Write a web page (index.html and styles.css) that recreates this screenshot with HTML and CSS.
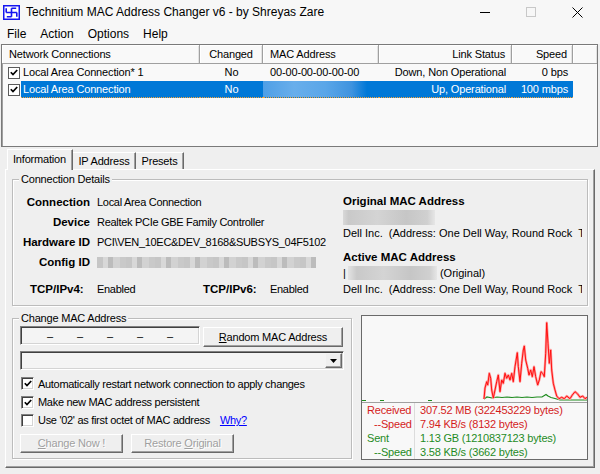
FILE: index.html
```html
<!DOCTYPE html>
<html lang="en">
<head>
<meta charset="utf-8">
<title>Technitium MAC Address Changer v6</title>
<link rel="stylesheet" href="styles.css">
</head>
<body>
<div class="titlebar">
  <svg class="appicon" width="17" height="15" viewBox="0 0 17 15">
    <rect x="0.75" y="0.75" width="15.5" height="13.5" fill="#fff" stroke="#1414f0" stroke-width="1.5"/>
    <path d="M8.5 3.2V11.8M3.2 7.5H13.8M8.5 3.2H13.2M8.5 11.8H3.8M3.2 7.5V3.2M13.8 7.5V11.8" stroke="#1414f0" stroke-width="1.6" fill="none"/>
  </svg>
  <span class="title">Technitium MAC Address Changer v6 - by Shreyas Zare</span>
  <div class="winctl">
    <span class="wbtn"><svg width="10" height="10" viewBox="0 0 10 10"><path d="M0 5.5H10" stroke="#000" stroke-width="1"/></svg></span>
    <span class="wbtn"><svg width="10" height="10" viewBox="0 0 10 10"><rect x="0.5" y="0.5" width="9" height="9" fill="none" stroke="#c8c8c8"/></svg></span>
    <span class="wbtn"><svg width="11" height="11" viewBox="0 0 11 11"><path d="M0.5 0.5L10.5 10.5M10.5 0.5L0.5 10.5" stroke="#000" stroke-width="1"/></svg></span>
  </div>
</div>
<div class="menubar"><span>File</span><span>Action</span><span>Options</span><span>Help</span></div>

<div class="listview">
  <div class="lv-head">
    <div class="c c1">Network Connections</div>
    <div class="c c2">Changed</div>
    <div class="c c3">MAC Address</div>
    <div class="c c4">Link Status</div>
    <div class="c c5">Speed</div>
    <div class="c c6"></div>
  </div>
  <div class="lv-row">
    <div class="c c1"><span class="lvchk"><svg width="8" height="7" viewBox="0 0 8 7"><path d="M0.8 3.2L3 5.6L7.2 1" stroke="#000" stroke-width="1.7" fill="none"/></svg></span><span class="name">Local Area Connection* 1</span></div>
    <div class="c c2">No</div>
    <div class="c c3">00-00-00-00-00-00</div>
    <div class="c c4">Down, Non Operational</div>
    <div class="c c5">0 bps</div>
  </div>
  <div class="lv-row sel">
    <div class="c c1"><span class="lvchk"><svg width="8" height="7" viewBox="0 0 8 7"><path d="M0.8 3.2L3 5.6L7.2 1" stroke="#000" stroke-width="1.7" fill="none"/></svg></span><span class="name">Local Area Connection</span></div>
    <div class="c c2">No</div>
    <div class="c c3"><span class="macblur"></span></div>
    <div class="c c4">Up, Operational</div>
    <div class="c c5">100 mbps</div>
  </div>
</div>

<div class="tabs">
  <div class="tabstrip">
    <span class="tab active">Information</span>
    <span class="tab t-ip">IP Address</span>
    <span class="tab t-pre">Presets</span>
  </div>
  <div class="panel">
    <div class="group details">
      <span class="legend">Connection Details</span>
      <div class="leftcol">
        <div class="kv"><span class="k">Connection</span><span class="v">Local Area Connection</span></div>
        <div class="kv"><span class="k">Device</span><span class="v">Realtek PCIe GBE Family Controller</span></div>
        <div class="kv"><span class="k">Hardware ID</span><span class="v">PCI\VEN_10EC&amp;DEV_8168&amp;SUBSYS_04F5102:</span></div>
        <div class="kv"><span class="k">Config ID</span><span class="v"><span class="blurbar"></span></span></div>
        <div class="tcp"><span class="tk1">TCP/IPv4:</span><span class="tv1">Enabled</span><span class="tk2">TCP/IPv6:</span><span>Enabled</span></div>
      </div>
      <div class="rightcol">
        <div class="rt">Original MAC Address</div>
        <div class="rl"><span class="macgray"></span></div>
        <div class="rl">Dell Inc.  (Address: One Dell Way, Round Rock  TX 78682 US)</div>
        <div class="rt gap">Active MAC Address</div>
        <div class="rl">|<span class="macgray short"></span> (Original)</div>
        <div class="rl">Dell Inc.  (Address: One Dell Way, Round Rock  TX 78682 US)</div>
      </div>
    </div>

    <div class="lower">
      <div class="group change">
        <span class="legend">Change MAC Address</span>
        <div class="row1">
          <div class="macin"><span>–</span><span>–</span><span>–</span><span>–</span><span>–</span></div>
          <div class="btn rnd"><u>R</u>andom MAC Address</div>
        </div>
        <div class="combo"><span class="arrow"><svg width="7" height="4" viewBox="0 0 7 4"><path d="M0 0H7L3.5 4Z" fill="#000"/></svg></span></div>
        <div class="opt o1"><span class="chk"><svg width="8" height="7" viewBox="0 0 8 7"><path d="M0.8 3.2L3 5.6L7.2 1" stroke="#000" stroke-width="1.7" fill="none"/></svg></span><span class="ot">Automatically restart network connection to apply changes</span></div>
        <div class="opt"><span class="chk"><svg width="8" height="7" viewBox="0 0 8 7"><path d="M0.8 3.2L3 5.6L7.2 1" stroke="#000" stroke-width="1.7" fill="none"/></svg></span><span class="ot">Make new MAC address persistent</span></div>
        <div class="opt"><span class="chk"></span><span class="ot">Use '02' as first octet of MAC address</span><span class="why">Why?</span></div>
        <div class="btns">
          <div class="btn dis"><u>C</u>hange Now !</div>
          <div class="btn dis">Restore <u>O</u>riginal</div>
        </div>
      </div>

      <div class="graph">
        <svg class="plot" width="225" height="86" viewBox="362 316 225 86">
          <path d="M362 400.5H366M380 400.5H384M428 400.5H432" stroke="#1f8b1f" stroke-width="1"/>
          <polyline fill="none" stroke="#1f8b1f" stroke-width="1.2" points="484,399 487,397 492,398 497,397 502,397.5 507,397 512,397.5 517,397 522,397.5 527,397 532,397.5 537,397 542,397 546,394.5 548,396 551,397.5 555,398.5 560,400 587,400"/>
          <polyline fill="none" stroke="#ff9a9a" stroke-width="2.4" stroke-linejoin="round" points="484,399 485,388 486.7,381.7 487.7,385 489.3,373.3 490.7,378.3 491.7,390 493.3,398 495,390 496.7,381.7 498.3,375 500,391.7 501.7,380 503.3,383.3 505,373.3 506.7,378.3 508.3,375 510,380 511.7,373.3 513.3,381.7 515,366.7 517.3,352.7 518.3,366.7 520,381.7 521.7,363.3 523.3,350 524.3,346 525.7,360 527.7,368.3 529,375 530.7,370 532.3,376.7 534,366.7 535.7,376.7 537.7,385 539.3,380 541,371.7 542.7,373.3 544.3,376.7 545.7,353.3 546.7,322.7 548,343.3 549.3,363.3 550.7,350 551.7,370 553.3,383.3 555,390 556.7,396 559,398.7 561.7,397.3 564.3,398.7 566.7,396 570,398.7 572.3,395 575,391.7 577.7,394 580,397.3 582.7,396 585,398.7 587,397.3"/>
          <polyline fill="none" stroke="#ff1010" stroke-width="1" stroke-linejoin="round" points="484,399 485,388 486.7,381.7 487.7,385 489.3,373.3 490.7,378.3 491.7,390 493.3,398 495,390 496.7,381.7 498.3,375 500,391.7 501.7,380 503.3,383.3 505,373.3 506.7,378.3 508.3,375 510,380 511.7,373.3 513.3,381.7 515,366.7 517.3,352.7 518.3,366.7 520,381.7 521.7,363.3 523.3,350 524.3,346 525.7,360 527.7,368.3 529,375 530.7,370 532.3,376.7 534,366.7 535.7,376.7 537.7,385 539.3,380 541,371.7 542.7,373.3 544.3,376.7 545.7,353.3 546.7,322.7 548,343.3 549.3,363.3 550.7,350 551.7,370 553.3,383.3 555,390 556.7,396 559,398.7 561.7,397.3 564.3,398.7 566.7,396 570,398.7 572.3,395 575,391.7 577.7,394 580,397.3 582.7,396 585,398.7 587,397.3"/>
        </svg>
        <div class="stats">
          <div class="srow red"><span class="sk">Received</span><span class="sv">307.52 MB (322453229 bytes)</span></div>
          <div class="srow red"><span class="sk ind">--Speed</span><span class="sv">7.94 KB/s (8132 bytes)</span></div>
          <div class="srow green"><span class="sk">Sent</span><span class="sv">1.13 GB (1210837123 bytes)</span></div>
          <div class="srow green"><span class="sk ind">--Speed</span><span class="sv">3.58 KB/s (3662 bytes)</span></div>
        </div>
      </div>
    </div>
  </div>
</div>
</body>
</html>
```

FILE: styles.css
```css
* { box-sizing: border-box; }
html, body { margin: 0; padding: 0; }
body {
  width: 600px; height: 474px; overflow: hidden;
  background: #efefef;
  font-family: "Liberation Sans", Arial, sans-serif;
  font-size: 11px; color: #000;
}

/* title bar */
.titlebar { display: flex; align-items: center; height: 24px; background: #f7f7f7; }
.appicon { display: block; margin: 0 6px 0 3px; flex: none; }
.title { font-size: 12px; white-space: nowrap; }
.winctl { display: flex; margin-left: auto; height: 24px; }
.wbtn { width: 46px; display: flex; align-items: center; justify-content: center; }
.wbtn svg { display: block; }

.menubar { display: flex; align-items: center; height: 20px; background: #f7f7f7; font-size: 12px; }
.menubar span { padding: 0 7px; }

/* list view */
.listview {
  height: 103px; margin: 0 2px 0 1px;
  border: 1px solid #7a7a7a; background: #f9f9f9;
  box-shadow: inset 1px 1px 0 #a0a0a0; overflow: hidden;
  letter-spacing: -0.15px;
}
.lv-head, .lv-row { display: flex; }
.lv-head { height: 19px; }
.lv-head .c {
  line-height: 18px; background: #f9f9f9;
  border-right: 1px solid #a0a0a0; border-bottom: 1px solid #a0a0a0;
  box-shadow: inset 1px 1px 0 #fff, inset -1px 0 0 #e2e2e2;
}
.lv-head .c6 { border-right: none; }
.c { flex: none; white-space: nowrap; overflow: hidden; padding: 0 7px; }
.c1 { width: 198px; }
.c2 { width: 63px; text-align: center; padding: 0; }
.c3 { width: 116px; }
.c4 { width: 133px; text-align: right; padding: 0 6px 0 0; }
.c5 { width: 61px; text-align: right; padding: 0 5px 0 0; }
.c6 { flex: 1; }

.lv-row { height: 17px; line-height: 17px; }
.lv-row .c1 { display: flex; align-items: center; padding: 0; }
.lvchk {
  flex: none; width: 12px; height: 12px; margin-left: 6px;
  border: 1px solid #5a5a5a; background: #fff;
  display: flex; align-items: center; justify-content: center;
}
.lvchk svg, .chk svg { display: block; }
.name { flex: 1; margin-left: 1px; padding-left: 2px; height: 17px; }

.sel .name, .sel .c2, .sel .c3, .sel .c4, .sel .c5 {
  background: #0078d7; color: #fff;
  border-bottom: 1px dotted #f3a33c; line-height: 16px;
}
.sel .c3 { padding: 0; }
.macblur {
  display: block; height: 16px; width: 104px;
  background: linear-gradient(90deg, #4f9fe6 0, #68aeeb 30%, #5aa6e8 60%, #3f93df 85%, #0078d7 100%);
}

/* tabs */
.tabs { margin: 2px 5px 0 5px; }
.tabstrip { display: flex; align-items: flex-end; height: 20px; padding-left: 2px; position: relative; z-index: 1; letter-spacing: -0.2px; }
.tab {
  height: 17px; line-height: 16px; text-align: center; white-space: nowrap;
  border-top: 1px solid #fff; border-right: 1px solid #696969;
  box-shadow: inset -1px 0 0 #a0a0a0;
}
.tab.active {
  height: 21px; margin-bottom: -1px; width: 66px;
  border-left: 1px solid #fff; background: #efefef;
  text-align: left; padding-left: 5px; line-height: 19px;
}
.t-ip { width: 63px; }
.t-pre { width: 48px; }

.panel {
  height: 299px;
  border-top: 1px solid #fff; border-left: 1px solid #fff;
  border-right: 1px solid #696969; border-bottom: 1px solid #696969;
  box-shadow: inset -1px -1px 0 #a0a0a0;
  padding: 9px 6px 0 6px;
}

.group {
  position: relative;
  border: 1px solid #bcbcbc;
  box-shadow: inset 1px 1px 0 #fff, 1px 1px 0 #fff;
}
.legend {
  position: absolute; top: -7px; left: 6px;
  padding: 0 2px; background: #efefef; line-height: 13px; white-space: nowrap;
  letter-spacing: -0.2px;
}

/* connection details */
.details { height: 127px; display: flex; padding-top: 12px; }
.leftcol { width: 313px; overflow: hidden; flex: none; }
.kv { display: flex; height: 20px; line-height: 20px; white-space: nowrap; }
.k { width: 77px; flex: none; text-align: right; font-weight: bold; font-size: 11.5px; }
.v { margin-left: 7px; letter-spacing: -0.3px; }
.blurbar {
  display: inline-block; width: 219px; height: 11px; vertical-align: middle; margin-top: -2px;
  background: repeating-linear-gradient(90deg, #c6c6c6 0 6px, #d8d8d8 6px 11px, #bcbcbc 11px 16px, #d2d2d2 16px 23px, #c9c9c9 23px 29px);
}
.tcp { display: flex; height: 20px; line-height: 20px; margin-top: 7px; white-space: nowrap; }
.tk1, .tk2 { font-weight: bold; font-size: 11.5px; }
.tk1 { width: 84px; padding-left: 17px; }
.tv1 { width: 106px; letter-spacing: -0.3px; }
.tk2 { width: 67px; }
.tcp span:last-child { letter-spacing: -0.3px; }

.rightcol { width: 239px; margin-left: 17px; overflow: hidden; padding-top: 1px; flex: none; }
.rt { font-weight: bold; font-size: 11.5px; line-height: 16px; white-space: nowrap; }
.rt.gap { margin-top: 8px; }
.rl { line-height: 16px; height: 16px; white-space: pre; display: flex; align-items: center; }
.macgray {
  display: block; width: 96px; height: 15px; margin-left: -4px;
  background: linear-gradient(90deg, rgba(200,200,200,0.3), #c9c9c9 10%, #d4d4d4 40%, #c6c6c6 70%, #d0d0d0 92%, rgba(210,210,210,0.3));
}
.macgray.short { width: 89px; height: 14px; margin-left: 2px; }

/* lower area */
.lower { display: flex; align-items: flex-start; margin-top: 9px; }
.change { width: 340px; height: 141px; margin-top: 3px; padding: 7px 0 0 7px; flex: none; }
.row1 { display: flex; align-items: flex-start; }
.macin, .combo {
  height: 19px; background: #f4f4f4;
  border: 1px solid; border-color: #808080 #fff #fff #808080;
  box-shadow: inset 1px 1px 0 #404040, inset -1px -1px 0 #d4d4d4;
}
.macin { width: 180px; display: flex; justify-content: space-evenly; align-items: center; padding: 0 2px; }
.btn {
  height: 20px; line-height: 18px; text-align: center; white-space: nowrap;
  background: #efefef; letter-spacing: -0.2px;
  border: 1px solid; border-color: #fff #696969 #696969 #fff;
  box-shadow: inset -1px -1px 0 #a0a0a0;
}
.rnd { width: 140px; margin-left: 3px; margin-top: 1px; }
.combo { width: 324px; margin-top: 4px; display: flex; justify-content: flex-end; padding: 1px; }
.arrow {
  width: 17px; height: 15px; background: #efefef;
  border: 1px solid; border-color: #f4f4f4 #696969 #696969 #f4f4f4;
  box-shadow: inset -1px -1px 0 #a0a0a0;
  display: flex; align-items: center; justify-content: center;
}
.arrow svg { display: block; }

.opt { display: flex; align-items: center; height: 18px; white-space: nowrap; letter-spacing: -0.3px; }
.opt.o1 { margin-top: 4px; height: 19px; }
.chk {
  flex: none; width: 13px; height: 13px; margin-left: 1px; background: #fff;
  border: 1px solid; border-color: #808080 #fff #fff #808080;
  box-shadow: inset 1px 1px 0 #404040, inset -1px -1px 0 #d4d4d4;
  display: flex; align-items: center; justify-content: center;
}
.ot { margin-left: 4px; }
.why { margin-left: 10px; color: #0000ff; text-decoration: underline; }

.btns { display: flex; gap: 8px; margin-top: 5px; }
.btn.dis { width: 103px; height: 19px; line-height: 17px; color: #a0a0a0; text-shadow: 1px 1px 0 #fff; }

/* graph */
.graph { width: 227px; height: 145px; margin-left: 9px; flex: none; border: 1px solid #6a6a6a; background: #f8f8f8; }
.plot { display: block; }
.stats { border-top: 1px solid #a0a0a0; letter-spacing: -0.2px; }
.srow { display: flex; height: 14px; line-height: 14px; white-space: nowrap; }
.sk { width: 53px; flex: none; padding-left: 5px; border-right: 1px solid #dcdcdc; }
.sk.ind { padding-left: 12px; }
.sv { padding-left: 5px; }
.red { color: #d41c1c; }
.green { color: #1f8b1f; }
```
